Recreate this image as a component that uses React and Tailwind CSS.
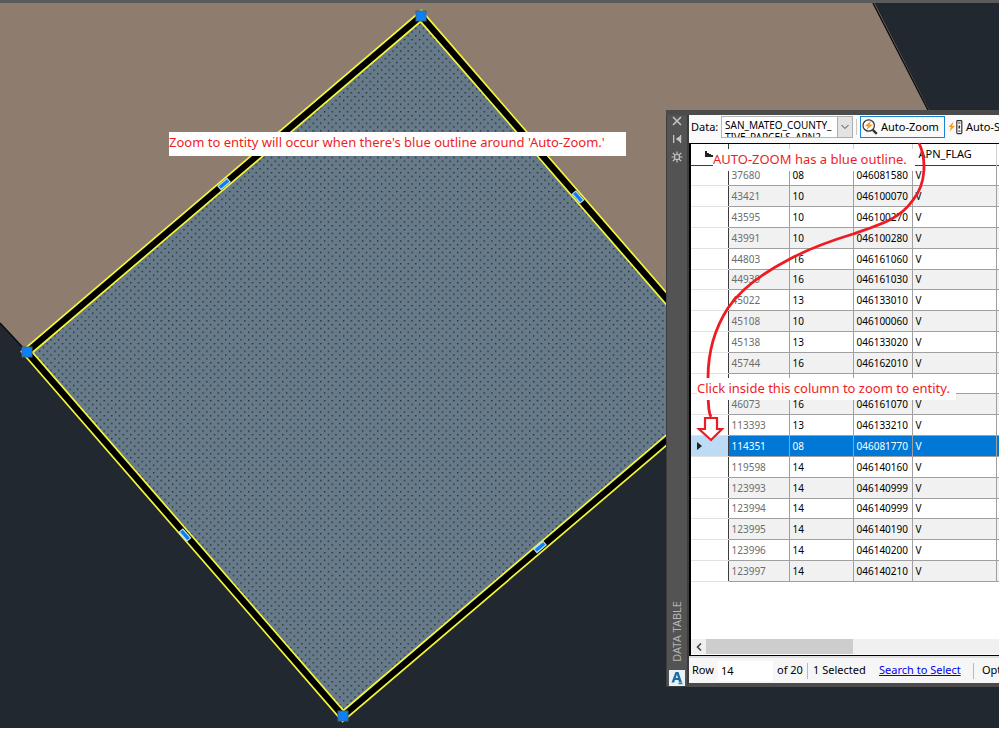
import { useState } from 'react'

const parcels = [
  ['37680', '08', '046081580', 'V'],
  ['43421', '10', '046100070', 'V'],
  ['43595', '10', '046100270', 'V'],
  ['43991', '10', '046100280', 'V'],
  ['44803', '16', '046161060', 'V'],
  ['44939', '16', '046161030', 'V'],
  ['45022', '13', '046133010', 'V'],
  ['45108', '10', '046100060', 'V'],
  ['45138', '13', '046133020', 'V'],
  ['45744', '16', '046162010', 'V'],
  ['', '', '', ''],
  ['46073', '16', '046161070', 'V'],
  ['113393', '13', '046133210', 'V'],
  ['114351', '08', '046081770', 'V'],
  ['119598', '14', '046140160', 'V'],
  ['123993', '14', '046140999', 'V'],
  ['123994', '14', '046140999', 'V'],
  ['123995', '14', '046140190', 'V'],
  ['123996', '14', '046140200', 'V'],
  ['123997', '14', '046140210', 'V'],
]

const corners = [[421, 16], [27, 352], [343, 716]]
// x, y, rotation of the edge grips
const midGrips = [[224, 184, -40], [578, 197, 49], [185, 535, 49], [540, 547, -40]]

function Drawing() {
  return (
    <svg className="absolute inset-0 w-full h-full" aria-hidden="true">
      <defs>
        <pattern id="dots" width="7.6" height="7.6" patternUnits="userSpaceOnUse">
          <rect width="7.6" height="7.6" fill="#667a89" />
          <rect x="1" y="1" width="1.25" height="1.25" fill="#12191f" />
          <rect x="4.8" y="4.8" width="1.25" height="1.25" fill="#12191f" />
        </pattern>
      </defs>
      <path d="M0 0H873L929 110L960 172L500 500L27 352L0 323Z" fill="#8e7d6f" />
      <path d="M873 3L929 112M0 323L27 352" stroke="#0b0d0f" strokeWidth="1.5" fill="none" />
      <path d="M421 16L737 380L343 716L27 352Z" fill="#212830" />
      <path d="M27 352L343 716L737 380L800 729H0Z" fill="#212830" />
      <path d="M421 16L737 380L343 716L27 352Z" fill="url(#dots)" />
      <path d="M421 16L737 380L343 716L27 352Z" fill="none" stroke="#f3f53a" strokeWidth="9.6" />
      <path d="M421 16L737 380L343 716L27 352Z" fill="none" stroke="#000" strokeWidth="6.2" />
      {midGrips.map(([x, y, r]) => (
        <g key={x} transform={`translate(${x} ${y}) rotate(${r})`}>
          <rect x="-6.5" y="-3" width="13" height="6" fill="#c9dcea" />
          <rect x="-5.5" y="-1.7" width="11" height="3.4" fill="#0a7ff5" />
        </g>
      ))}
      {corners.map(([x, y]) => (
        <rect key={x} x={x - 5} y={y - 5} width="10" height="10" fill="#0a80fb" stroke="#4d6070" />
      ))}
    </svg>
  )
}

function ZoomIcon() {
  return (
    <svg width="16" height="16" viewBox="0 0 16 16" fill="none" aria-hidden="true">
      <circle cx="6.7" cy="6.5" r="5.7" fill="#fff" stroke="#333" strokeWidth="1.2" />
      <path d="M10.8 10.8L14.8 14.8" stroke="#333" strokeWidth="2.4" />
      <path d="M9.4 1.6L2.6 7.2H6L4 11.4L10.9 5.6H7.5Z" fill="#f59a23" />
    </svg>
  )
}

function SelectIcon() {
  return (
    <svg width="16" height="16" viewBox="0 0 16 16" fill="none" aria-hidden="true">
      <path d="M5.5 2.5L0.5 8H3L1.5 12.5L7 7H4.2Z" fill="#f59a23" />
      <rect x="8.8" y="1.6" width="5" height="13" rx="0.8" fill="#fff" stroke="#333" strokeWidth="1.2" />
      <path d="M10.2 4H12.5M10.2 12H12.5" stroke="#333" />
      <rect x="10.5" y="6.5" width="1.6" height="3" fill="#333" />
    </svg>
  )
}

function TitleBar() {
  return (
    <div className="w-[21px] shrink-0 flex flex-col items-center bg-[#535353] border-l border-b border-[#3e3e3e] text-[#c4c4c4]">
      <button type="button" aria-label="Close">
        <svg width="12" height="12" viewBox="0 0 12 12" stroke="currentColor" strokeWidth="1.6">
          <path d="M2 2L10 10M10 2L2 10" />
        </svg>
      </button>
      <button type="button" aria-label="Auto-hide" className="mt-1.5">
        <svg width="12" height="12" viewBox="0 0 12 12" fill="currentColor">
          <path d="M2 2H3.3V10H2ZM9 2H10.2V10H9ZM9 3V9L4.8 6Z" />
        </svg>
      </button>
      <button type="button" aria-label="Properties" className="mt-1.5">
        <svg width="12" height="12" viewBox="0 0 12 12" fill="none" stroke="currentColor" strokeWidth="1.2">
          <circle cx="6" cy="6" r="2.5" />
          <path d="M6 0.5V3M6 9V11.5M0.5 6H3M9 6H11.5M1.8 1.8L4 4M8 8L10.2 10.2M10.2 1.8L8 4M4 8L1.8 10.2" />
        </svg>
      </button>
      <div className="mt-auto mb-2 [writing-mode:vertical-rl] rotate-180 text-[11px] leading-4 text-[#b4b4b4] whitespace-nowrap">
        DATA TABLE
      </div>
      <svg width="16" height="16" viewBox="0 0 16 16" aria-hidden="true">
        <rect width="16" height="16" fill="#e9f1f5" />
        <path d="M2.5 12.5L6.5 2H9.5L13 12.5H10.2L9.4 10H6L5.2 12.5ZM6.7 8H9L7.9 4.6Z" fill="#1a6da5" fillRule="evenodd" />
        <path d="M9.5 13.5H13.5" stroke="#1b8ac4" strokeWidth="1.5" />
      </svg>
    </div>
  )
}

function Toolbar({ autoZoom, onToggle }) {
  return (
    <div className="h-7 pb-1 flex items-center bg-[#fafafa] whitespace-nowrap *:shrink-0">
      <label htmlFor="data-source" className="w-[32px] pl-0.5 text-[11px]">Data:</label>
      <div className="relative w-[132px] h-[22px]">
        <select
          id="data-source"
          className="absolute inset-0 w-full h-full appearance-none bg-white border border-[#b5b5b5] text-transparent text-[10px]"
        >
          <option>SAN_MATEO_COUNTY_ACTIVE_PARCELS_APN2</option>
        </select>
        <div className="absolute inset-0 flex pointer-events-none">
          <div aria-hidden="true" className="flex-1 min-w-0 m-px mt-[3px] pl-[3px] overflow-hidden text-[10px] leading-[12px]">
            <p>SAN_MATEO_COUNTY_</p>
            <p>TIVE_PARCELS_APN2</p>
          </div>
          <div className="w-4 flex items-center justify-center bg-[#e3e3e3] border border-[#adadad]">
            <svg width="8" height="6" viewBox="0 0 8 6" fill="none" stroke="#444">
              <path d="M0.5 1L4 4.5L7.5 1" />
            </svg>
          </div>
        </div>
      </div>
      <div className="w-px h-4 mx-[3px] bg-[#c8c8c8]" />
      <button
        type="button"
        aria-pressed={autoZoom}
        onClick={onToggle}
        className={`h-[22px] w-[85px] flex items-center gap-[3px] pl-px text-[11px] border ${autoZoom ? 'border-[#1883d7]' : 'border-transparent'}`}
      >
        <ZoomIcon />
        Auto-Zoom
      </button>
      <button type="button" className="h-[22px] ml-[3px] flex items-center gap-[2px] text-[11px]">
        <SelectIcon />
        Auto-Select
      </button>
    </div>
  )
}

function ParcelTable({ selected, onSelect }) {
  return (
    <table className="table-fixed w-[367px] h-[438px] border-collapse text-[10px] leading-[14px]">
      <colgroup>
        <col className="w-[37px]" />
        <col className="w-[61px]" />
        <col className="w-16" />
        <col className="w-[59px]" />
        <col className="w-[84px]" />
        <col />
      </colgroup>
      <thead>
        <tr className="h-[21px] border-b border-[#3c3c3c]">
          <th className="border-r border-[#3c3c3c]">
            <svg width="8" height="6" viewBox="0 0 8 6" className="ml-3.5" aria-hidden="true">
              <path d="M0 0H2V2H4V3H6V4H8V6H0Z" fill="#222" />
            </svg>
          </th>
          <th className="border-r border-[#d0d0d0]" />
          <th className="border-r border-[#d0d0d0]" />
          <th className="border-r border-[#d0d0d0]" />
          <th className="border-r border-[#d0d0d0] pl-[6px] text-left text-[11px] font-normal">APN_FLAG</th>
          <th />
        </tr>
      </thead>
      <tbody>
        {parcels.map(([id, code, apn, flag], i) => {
          const active = i === selected
          const row = active ? 'bg-[#0078d7] text-white' : i % 2 ? 'bg-[#f1f1f1]' : 'bg-white'
          return (
            <tr key={i} className={`h-5 ${row}`} onClick={() => onSelect(i)}>
              <td className={`border-r border-r-[#3c3c3c] border-b border-b-[#e2e2e2] pl-1.5 ${active ? 'bg-[#bbdcf4]' : 'bg-white'}`}>
                {active && (
                  <svg width="5" height="8" viewBox="0 0 5 8" aria-hidden="true">
                    <path d="M0 0L5 4L0 8Z" fill="#222" />
                  </svg>
                )}
              </td>
              <td className={`border-r border-b border-[#a0a0a0] pl-[3px] ${active ? '' : 'text-[#6d6d6d]'}`}>{id}</td>
              <td className="border-r border-b border-[#a0a0a0] pl-[3px]">{code}</td>
              <td className="border-r border-b border-[#a0a0a0] pl-[3px]">{apn}</td>
              <td className="border-r border-b border-[#a0a0a0] pl-[3px]">{flag}</td>
              <td className="border-b border-[#a0a0a0]" />
            </tr>
          )
        })}
      </tbody>
    </table>
  )
}

function StatusBar() {
  return (
    <div className="h-[27px] flex items-center bg-[#f6f6f6] border-t-2 border-[#dedede] text-[11px] whitespace-nowrap *:shrink-0">
      <label htmlFor="row-number" className="w-[29px] pl-[3px]">Row</label>
      <input id="row-number" defaultValue="14" className="w-[55px] h-5 pl-[3px] bg-white" />
      <span className="w-[30px] ml-1">of 20</span>
      <span className="w-px h-4 bg-[#b9b9b9]" />
      <span className="w-[66px] ml-[5px]">1 Selected</span>
      <a href="#search" className="w-[82px] text-[#0000f0] underline">Search to Select</a>
      <span className="w-px h-4 ml-3 mr-2 bg-[#b9b9b9]" />
      <button type="button">Options</button>
    </div>
  )
}

function Notes() {
  return (
    <div className="absolute inset-0 pointer-events-none text-[13px] leading-5 text-[#ee1c24] whitespace-nowrap">
      <svg className="absolute inset-0 w-full h-full" fill="none" stroke="#ed1c24" strokeWidth="2.8" aria-hidden="true">
        <path d="M919 143C926 158 927 183 913 200C900 219 880 225 853 234C830 241 808 249 788 260C765 272 741 289 728 308C715 328 708 352 708 378" />
        <path d="M708 398C709 406 708 411 711 417" />
        <path d="M705 418H717V429H722L711 440L699 429H705Z" fill="#fff" strokeWidth="2.2" />
      </svg>
      <p className="absolute left-[169px] top-[132px] w-[457px] h-6 bg-white">
        Zoom to entity will occur when there's blue outline around 'Auto-Zoom.'
      </p>
      <p className="absolute left-[713px] top-[149px] w-[202px] h-[22px] bg-white">AUTO-ZOOM has a blue outline.</p>
      <p className="absolute left-[697px] top-[378px] w-[259px] h-[22px] bg-white">Click inside this column to zoom to entity.</p>
    </div>
  )
}

export default function App() {
  const [autoZoom, setAutoZoom] = useState(true)
  const [selected, setSelected] = useState(13)

  return (
    <div className="h-screen pb-px bg-white font-['Noto_Sans','Open_Sans',sans-serif] text-black">
      <main className="relative h-full overflow-hidden bg-[#212830] border-t-[3px] border-[#5b5b5b]">
        <div className="absolute inset-x-0 -top-[3px] bottom-0">
          <Drawing />
          <div className="absolute inset-x-0 top-0 h-[3px] bg-[#5b5b5b]" />
          <section className="absolute left-[666px] right-0 top-[110px] flex border-t-[5px] border-[#4a4b4a] overflow-hidden">
            <TitleBar />
            <div className="flex-1 min-w-0 border-l-2 border-l-[#3c3c3c] border-b-4 border-b-[#4a4b4a] overflow-hidden">
              <Toolbar autoZoom={autoZoom} onToggle={() => setAutoZoom(!autoZoom)} />
              <div className="h-[513px] flex flex-col border-l-2 border-y border-black bg-white overflow-hidden">
                <ParcelTable selected={selected} onSelect={setSelected} />
                <div className="mt-auto h-[15px] mb-px shrink-0 flex bg-[#f0f0f0]">
                  <button type="button" aria-label="Scroll left" className="w-[15px] flex items-center justify-center">
                    <svg width="6" height="8" viewBox="0 0 6 8" fill="none" stroke="#444" strokeWidth="1.6">
                      <path d="M5 0.5L1.5 4L5 7.5" />
                    </svg>
                  </button>
                  <div className="w-[147px] bg-[#cdcdcd]" />
                </div>
              </div>
              <StatusBar />
            </div>
          </section>
          <Notes />
        </div>
      </main>
    </div>
  )
}
